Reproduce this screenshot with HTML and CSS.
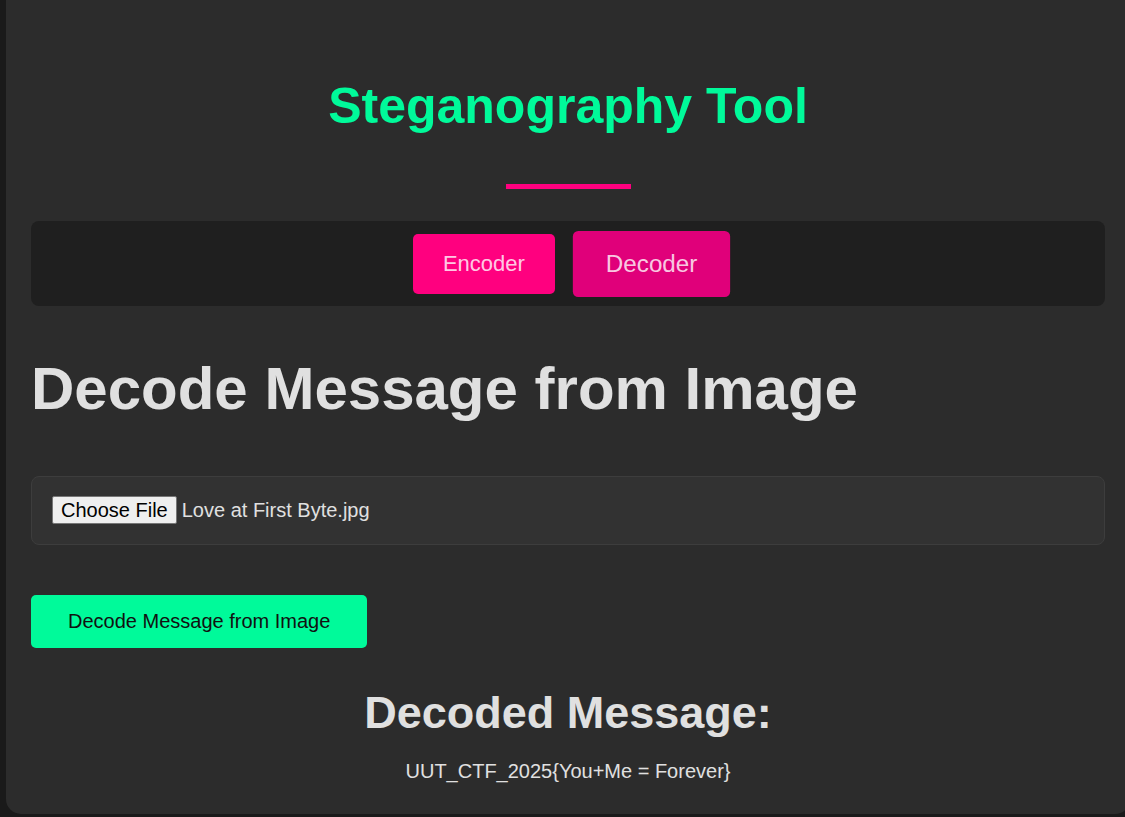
FILE: index.html
```html
<!DOCTYPE html>
<html lang="en">
<head>
<meta charset="utf-8">
<title>Steganography Tool</title>
<link rel="stylesheet" href="styles.css">
</head>
<body>
<div class="page">
  <main class="container">
    <h1 class="title">Steganography Tool</h1>
    <div class="title-rule"></div>
    <nav class="tabs">
      <button class="tab">Encoder</button>
      <button class="tab tab-active">Decoder</button>
    </nav>
    <h1 class="section-heading">Decode Message from Image</h1>
    <div class="file-box">
      <span class="file-button">Choose File</span>
      <span class="file-name">Love at First Byte.jpg</span>
    </div>
    <button class="decode-button">Decode Message from Image</button>
    <h2 class="result-heading">Decoded Message:</h2>
    <p class="result-text">UUT_CTF_2025{You+Me = Forever}</p>
  </main>
</div>
</body>
</html>
```
FILE: styles.css
```css
html, body {
  margin: 0;
  padding: 0;
  overflow: hidden;
}

body {
  background: #1a1a1a;
  font-family: "Liberation Sans", Arial, Helvetica, sans-serif;
  color: #e0e0e0;
}

.page {
  padding-left: 6px;
  width: 1124px;
}

.container {
  background: #2c2c2c;
  border-radius: 0 0 15px 15px;
  padding: 78px 25px 31px;
  box-sizing: border-box;
  width: 1124px;
}

.title {
  margin: 0;
  font-size: 50px;
  line-height: 56px;
  font-weight: bold;
  color: #00fa9a;
  text-align: center;
}

.title-rule {
  width: 125px;
  height: 5px;
  background: #ff007f;
  margin: 50px auto 0;
}

.tabs {
  margin-top: 32px;
  background: #1f1f1f;
  border-radius: 8px;
  padding: 13px 12px 12px;
  display: flex;
  justify-content: center;
  gap: 25px;
}

.tab {
  font-family: inherit;
  font-size: 22px;
  line-height: 26px;
  padding: 17px 30px;
  border: none;
  border-radius: 5px;
  background: #ff007f;
  color: rgba(255, 255, 255, 0.8);
}

.tab-active {
  background: #e0007a;
  transform: scale(1.1);
}

.section-heading {
  margin: 48px 0 0;
  font-size: 60px;
  line-height: 70px;
  font-weight: bold;
  color: #e0e0e0;
}

.file-box {
  margin-top: 52px;
  background: #323232;
  border: 1px solid #3d3d3d;
  border-radius: 8px;
  padding: 19px 20px 20px;
  display: flex;
  align-items: center;
  font-size: 20px;
}

.file-button {
  background: #efefef;
  color: #000;
  border: 1px solid #767676;
  border-radius: 2px;
  padding: 1px 8px;
  line-height: 24px;
  margin-right: 5px;
}

.file-name {
  color: #e0e0e0;
  line-height: 24px;
}

.decode-button {
  display: block;
  margin-top: 50px;
  font-family: inherit;
  font-size: 20px;
  line-height: 23px;
  padding: 15px 37px;
  border: none;
  border-radius: 5px;
  background: #00fa9a;
  color: #111;
}

.result-heading {
  margin: 39px 0 0;
  font-size: 45px;
  line-height: 52px;
  font-weight: bold;
  text-align: center;
  color: #e0e0e0;
}

.result-text {
  margin: 21px 0 0;
  font-size: 20px;
  line-height: 23px;
  text-align: center;
  color: #e0e0e0;
}
```
